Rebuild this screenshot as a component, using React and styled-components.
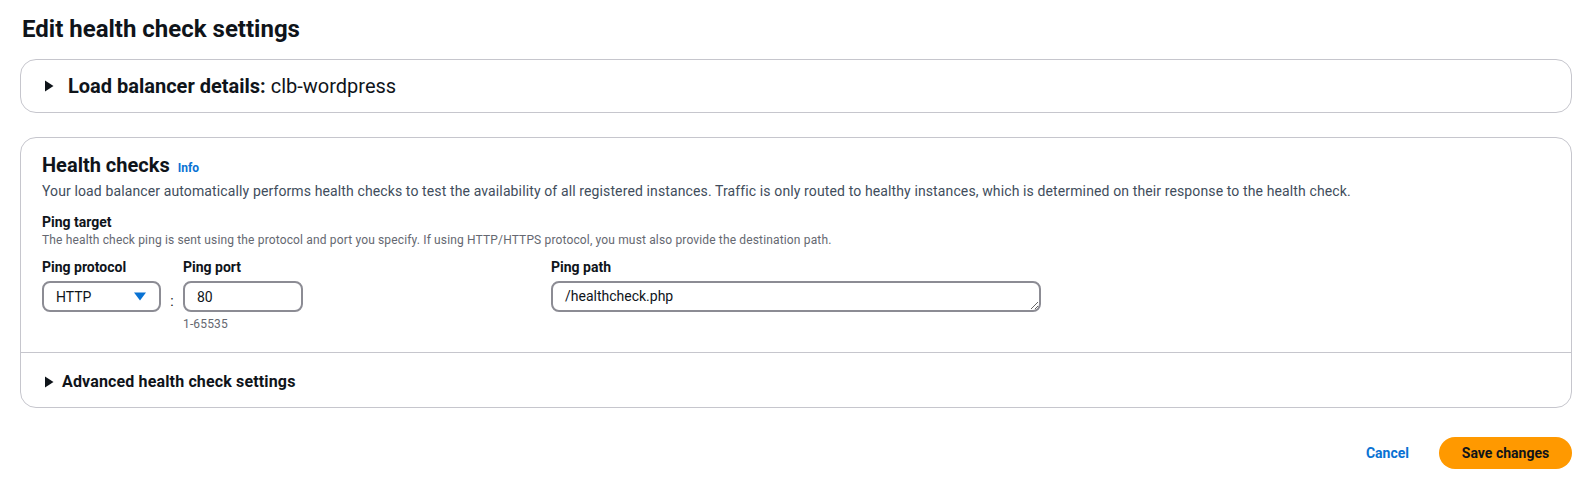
import React from 'react'
import styled, { createGlobalStyle } from 'styled-components'

const GlobalStyle = createGlobalStyle`
    body {
        margin: 0;
        background: #ffffff;
        font-family: Roboto, "Liberation Sans", Arial, sans-serif;
        color: #0f141a;
    }
`

const StyledPage = styled.div`
    padding: 13px 17px 0 20px;
`

const StyledTitle = styled.h1`
    margin: 0 0 14px 2px;
    font-size: 24px;
    line-height: 32px;
    font-weight: 700;
    color: #0f141a;
`

const StyledCard = styled.section`
    border: 1px solid #c6c6cd;
    border-radius: 16px;
    background: #ffffff;
    margin-bottom: ${(props) => props.gap || 0}px;
`

const StyledExpandHeader = styled.div`
    display: flex;
    align-items: center;
    gap: ${(props) => (props.small ? 8 : 14)}px;
    padding: ${(props) => (props.small ? '18px 23px 14px' : '14px 23px 14px')};
    font-size: ${(props) => (props.small ? 16 : 20)}px;
    line-height: ${(props) => (props.small ? 22 : 24)}px;
    letter-spacing: ${(props) => (props.small ? '0.15px' : '0')};
    font-weight: 700;
    color: #0f141a;
`

const StyledLight = styled.span`
    font-weight: 400;
`

const StyledBody = styled.div`
    padding: 15px 21px 20px;
    border-bottom: 1px solid #c6c6cd;
`

const StyledHeading = styled.h2`
    display: flex;
    align-items: baseline;
    gap: 8px;
    margin: 0 0 1px;
    font-size: 20px;
    line-height: 24px;
    font-weight: 700;
`

const StyledInfo = styled.a`
    font-size: 12px;
    font-weight: 700;
    color: #0972d3;
    text-decoration: none;
`

const StyledDescription = styled.p`
    margin: 0 0 11px;
    font-size: 14px;
    line-height: 20px;
    letter-spacing: 0.12px;
    color: #414d5c;
`

const StyledLabel = styled.div`
    font-size: 14px;
    line-height: 20px;
    font-weight: 700;
    color: #0f141a;
`

const StyledHint = styled.div`
    font-size: 12px;
    line-height: 16px;
    letter-spacing: 0.15px;
    color: #656871;
`

const StyledFieldRow = styled.div`
    display: flex;
    align-items: flex-start;
    margin-top: 9px;
`

const StyledField = styled.div`
    display: flex;
    flex-direction: column;
    gap: 4px;
    width: ${(props) => props.width}px;
    margin-left: ${(props) => props.offset || 0}px;
`

const StyledSelect = styled.div`
    box-sizing: border-box;
    display: flex;
    align-items: center;
    justify-content: space-between;
    height: 31px;
    padding: 0 13px 0 12px;
    border: 2px solid #8c8c94;
    border-radius: 8px;
    font-size: 14px;
    color: #0f141a;
`

const StyledColon = styled.span`
    width: 22px;
    text-align: center;
    font-size: 14px;
    line-height: 20px;
    margin-top: 34px;
    color: #0f141a;
`

const StyledInput = styled.input`
    box-sizing: border-box;
    width: 100%;
    height: 31px;
    padding: 0 12px;
    border: 2px solid #8c8c94;
    border-radius: 8px;
    font: 14px Roboto, "Liberation Sans", Arial, sans-serif;
    color: #0f141a;
    outline: none;
`

const StyledTextarea = styled.textarea`
    box-sizing: border-box;
    display: block;
    width: 100%;
    height: 31px;
    padding: 4px 12px;
    border: 2px solid #8c8c94;
    border-radius: 8px;
    font: 14px/19px Roboto, "Liberation Sans", Arial, sans-serif;
    color: #0f141a;
    resize: vertical;
    overflow: hidden;
    outline: none;
`

const StyledActions = styled.div`
    display: flex;
    justify-content: flex-end;
    align-items: center;
    gap: 30px;
    margin-top: 29px;
`

const StyledLinkButton = styled.button`
    border: none;
    background: none;
    padding: 0;
    font: 700 14px Roboto, "Liberation Sans", Arial, sans-serif;
    color: #0972d3;
`

const StyledPrimaryButton = styled.button`
    height: 32px;
    width: 133px;
    border: none;
    border-radius: 20px;
    background: #ff9900;
    font: 700 14px Roboto, "Liberation Sans", Arial, sans-serif;
    color: #0f141a;
`

const Caret = () => (
    <svg width="10" height="12" viewBox="0 0 10 12">
        <path d="M1 0.5 L9.5 6 L1 11.5 Z" fill="#0f141a" />
    </svg>
)

const DownCaret = () => (
    <svg width="12" height="9" viewBox="0 0 12 9">
        <path d="M0 0.5 H12 L6 8.5 Z" fill="#0972d3" />
    </svg>
)

const App = () => {
    return (
        <StyledPage>
            <GlobalStyle />
            <StyledTitle>Edit health check settings</StyledTitle>

            <StyledCard gap={24}>
                <StyledExpandHeader>
                    <Caret />
                    <span>
                        Load balancer details: <StyledLight>clb-wordpress</StyledLight>
                    </span>
                </StyledExpandHeader>
            </StyledCard>

            <StyledCard>
                <StyledBody>
                    <StyledHeading>
                        Health checks <StyledInfo href="#">Info</StyledInfo>
                    </StyledHeading>
                    <StyledDescription>
                        Your load balancer automatically performs health checks to test the
                        availability of all registered instances. Traffic is only routed to
                        healthy instances, which is determined on their response to the health
                        check.
                    </StyledDescription>
                    <StyledLabel>Ping target</StyledLabel>
                    <StyledHint>
                        The health check ping is sent using the protocol and port you specify.
                        If using HTTP/HTTPS protocol, you must also provide the destination path.
                    </StyledHint>

                    <StyledFieldRow>
                        <StyledField width={119}>
                            <StyledLabel>Ping protocol</StyledLabel>
                            <StyledSelect>
                                HTTP
                                <DownCaret />
                            </StyledSelect>
                        </StyledField>
                        <StyledColon>:</StyledColon>
                        <StyledField width={120}>
                            <StyledLabel>Ping port</StyledLabel>
                            <StyledInput defaultValue="80" />
                            <StyledHint>1-65535</StyledHint>
                        </StyledField>
                        <StyledField width={490} offset={248}>
                            <StyledLabel>Ping path</StyledLabel>
                            <StyledTextarea rows={1} defaultValue="/healthcheck.php" />
                        </StyledField>
                    </StyledFieldRow>
                </StyledBody>
                <StyledExpandHeader small>
                    <Caret />
                    <span>Advanced health check settings</span>
                </StyledExpandHeader>
            </StyledCard>

            <StyledActions>
                <StyledLinkButton>Cancel</StyledLinkButton>
                <StyledPrimaryButton>Save changes</StyledPrimaryButton>
            </StyledActions>
        </StyledPage>
    )
}

export default App
